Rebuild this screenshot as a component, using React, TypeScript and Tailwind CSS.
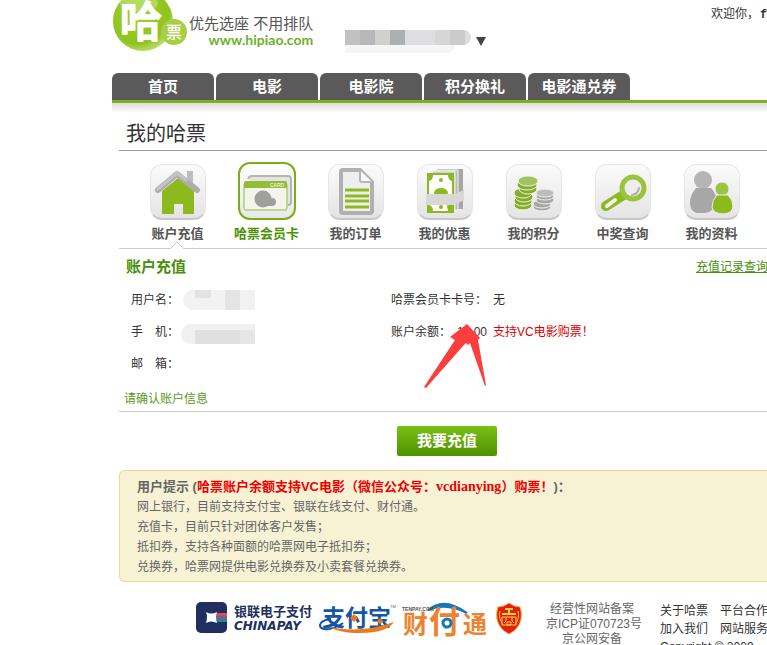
import type { ReactNode } from 'react'

interface MenuItem {
  label: string
  icon: ReactNode
  active?: boolean
}

const HouseIcon = () => (
  <svg viewBox="0 0 56 56" className="h-14 w-14 shrink-0">
    <path d="M37 7h6v14l-6-5z" fill="#bdbdbd" />
    <path d="M12 27 28 14l16 13v23H33V40h-9v10H12z" fill="#8db91f" />
    <path d="M8 26 27 10l20 16" fill="none" stroke="#adadad" strokeWidth="6" strokeLinecap="round" strokeLinejoin="round" />
    <path d="M8 25 27 9l9 7" fill="none" stroke="#c4c4c4" strokeWidth="3" strokeLinecap="round" />
  </svg>
)

const CardIcon = () => (
  <svg viewBox="0 0 56 56" className="h-14 w-14 shrink-0">
    <path d="M9 16q1-3 4-3h36q3 0 3 3v23q0 3-3 3" fill="#e4e4e4" stroke="#b5b5b5" strokeWidth="2" />
    <rect x="5" y="20" width="43" height="27" rx="2" fill="#f3f5ec" stroke="#94bd35" />
    <path d="M5 25v-5q0-2 2-2h39q2 0 2 2v5z" fill="#94bd35" />
    <text x="31" y="24" fontSize="5" fontFamily="Liberation Sans, sans-serif" fill="#fff">CARD</text>
    <circle cx="24" cy="36" r="8.5" fill="#9f9f9f" />
    <circle cx="33" cy="39" r="4" fill="#9f9f9f" />
    <path d="m20 43 13 0 2-6-5-4z" fill="#9f9f9f" />
  </svg>
)

const OrderIcon = () => (
  <svg viewBox="0 0 56 56" className="h-14 w-14 shrink-0">
    <path d="M15 6h17l12 12v29q0 2-2 2H15q-2 0-2-2V8q0-2 2-2z" fill="#eeeeee" stroke="#b0b0b0" strokeWidth="4" />
    <path d="M32 6v10q0 2 2 2h10" fill="#fafafa" stroke="#b5b5b5" strokeWidth="2" />
    <path d="M17 26h24M17 32h24M17 37h24M17 43h24" stroke="#8db91f" strokeWidth="3" />
  </svg>
)

const CouponIcon = () => (
  <svg viewBox="0 0 56 56" className="h-14 w-14 shrink-0">
    <path d="M20 5h26v40H20z" fill="#a6a6a6" />
    <path d="M18 6h23v40H18z" fill="#b9b9b9" stroke="#f3f3f3" />
    <path d="M15 7h23v40H15z" fill="#d1d1d1" stroke="#f3f3f3" />
    <path d="M10 9h27v40H10z" fill="#8db91f" />
    <path d="M16 11h15q0 5 4 6v19q-4 0-5 6l1 5H16q0-5-4-6V17q4-1 4-6z" fill="#fff" />
    <circle cx="24" cy="16" r="2" fill="#8db91f" />
    <ellipse cx="24" cy="29" rx="7" ry="5" fill="#8db91f" />
    <path d="M9 30h28l10-4v10l-10 5H9z" fill="#d8d8d8" />
    <circle cx="24" cy="43" r="2" fill="#8db91f" />
  </svg>
)

const CoinsIcon = () => (
  <svg viewBox="0 0 56 56" className="h-14 w-14 shrink-0">
    <g fill="#85ad2d" stroke="#eef5dd" strokeWidth="1">
      <ellipse cx="17" cy="41" rx="9" ry="5" />
      <ellipse cx="17" cy="37" rx="9" ry="5" />
      <ellipse cx="18" cy="33" rx="9" ry="5" />
      <ellipse cx="17" cy="29" rx="9" ry="5" />
      <ellipse cx="22" cy="25" rx="9" ry="5" />
      <ellipse cx="21" cy="21" rx="10" ry="5" />
      <ellipse cx="22" cy="17" rx="10" ry="5" fill="#a0c365" />
    </g>
    <g fill="#a5a5a5" stroke="#f2f2f2" strokeWidth="1">
      <ellipse cx="36" cy="43" rx="9" ry="4" />
      <ellipse cx="36" cy="40" rx="9" ry="4" />
      <ellipse cx="39" cy="36" rx="9" ry="4" />
      <ellipse cx="39" cy="32" rx="9" ry="4" />
      <ellipse cx="39" cy="29" rx="9" ry="4" fill="#bcbcbc" />
    </g>
  </svg>
)

const SearchIcon = () => (
  <svg viewBox="0 0 56 56" className="h-14 w-14 shrink-0">
    <path d="M11 42 30 30" stroke="#8db91f" strokeWidth="10" strokeLinecap="round" />
    <path d="m12 42 8-6" stroke="#f5f5f5" strokeWidth="4" strokeLinecap="round" />
    <circle cx="38" cy="24" r="11" fill="#ededed" stroke="#9cc33d" strokeWidth="5" />
    <path d="M44 24q-1 6-7 7" fill="none" stroke="#b0b0b0" strokeWidth="2" strokeLinecap="round" />
  </svg>
)

const PeopleIcon = () => (
  <svg viewBox="0 0 56 56" className="h-14 w-14 shrink-0">
    <circle cx="19" cy="16" r="9" fill="#b5b5b5" />
    <path d="M12 24h15q6 6 5 14-2 10-11 11H13Q6 47 6 39t6-15z" fill="#a7a7a7" />
    <circle cx="38" cy="25" r="7" fill="#9bc344" stroke="#eee" strokeWidth="1" />
    <path d="M33 31h11q5 5 5 11 0 7-9 8-11 0-12-7 0-7 5-12z" fill="#8db91f" stroke="#eee" strokeWidth="1" />
  </svg>
)

const tabs = ['首页', '电影', '电影院', '积分换礼', '电影通兑券']

const menu: MenuItem[] = [
  { label: '账户充值', icon: <HouseIcon /> },
  { label: '哈票会员卡', icon: <CardIcon />, active: true },
  { label: '我的订单', icon: <OrderIcon /> },
  { label: '我的优惠', icon: <CouponIcon /> },
  { label: '我的积分', icon: <CoinsIcon /> },
  { label: '中奖查询', icon: <SearchIcon /> },
  { label: '我的资料', icon: <PeopleIcon /> },
]

const tips = [
  '网上银行，目前支持支付宝、银联在线支付、财付通。',
  '充值卡，目前只针对团体客户发售；',
  '抵扣券，支持各种面额的哈票网电子抵扣券；',
  '兑换券，哈票网提供电影兑换券及小卖套餐兑换券。',
]

const Logo = () => (
  <a href="#" className="flex" aria-label="哈票">
    <svg viewBox="0 0 76 54" className="h-[54px] w-[76px]">
      <defs>
        <radialGradient id="ball" cx="40%" cy="35%" r="70%">
          <stop offset="0" stopColor="#a5d02a" />
          <stop offset="0.75" stopColor="#8fc31f" />
          <stop offset="1" stopColor="#c3e37a" />
        </radialGradient>
      </defs>
      <circle cx="31" cy="21" r="30" fill="url(#ball)" />
      <ellipse cx="27" cy="3" rx="19" ry="9" fill="#c5e487" opacity="0.6" />
      <circle cx="62" cy="32" r="13" fill="#a6cf45" />
      <text x="8" y="37" fontSize="42" fontWeight="500" fill="#fff" stroke="#fff" strokeWidth="2" strokeLinejoin="round" fontFamily="Noto Sans CJK SC, sans-serif">哈</text>
      <text x="54" y="38" fontSize="16" fontWeight="500" fill="#fff" fontFamily="Noto Sans CJK SC, sans-serif">票</text>
    </svg>
    <span className="ml-[1px] flex flex-col pt-[14px] text-right">
      <span className="text-[15px] leading-5 whitespace-nowrap text-[#555]">优先选座 不用排队</span>
      <span className="font-[Lato,sans-serif] text-sm leading-3 font-bold text-[#6fb02c]">www.hipiao.com</span>
    </span>
  </a>
)

const Header = () => (
  <header className="flex h-[73px] items-start">
    <Logo />
    <div className="ml-8 flex pt-[30px]">
      <div>
        <div className="flex h-[15px] overflow-hidden rounded-r-lg">
          <span className="w-[15px] bg-[#c2c1c1]" />
          <span className="w-[15px] bg-[#b5b7b9]" />
          <span className="w-[15px] bg-[#d0d0ce]" />
          <span className="w-[15px] bg-[#adb0b0]" />
          <span className="w-[30px] bg-[#dedddf]" />
          <span className="w-[15px] bg-[#d6d6d7]" />
          <span className="w-[15px] bg-[#cbcbcc]" />
          <span className="w-[6px] bg-[#dedede]" />
        </div>
        <div className="h-2 w-[110px] rounded-br-full bg-[#f6f6f6]" />
      </div>
      <button className="mt-[7px] ml-[5px] h-[9px]" aria-label="选择城市">
        <svg viewBox="0 0 10 9" className="h-[9px] w-[10px]">
          <path d="M0 0h10L5 9z" fill="#444" />
        </svg>
      </button>
    </div>
    <p className="mt-1 ml-auto w-14 shrink-0 leading-5 whitespace-nowrap">
      欢迎你，<b className="ml-[1px] font-['Liberation_Mono',monospace]">f</b>
    </p>
  </header>
)

const ChinaPay = () => (
  <a href="#" className="flex items-center gap-[7px] text-[#21305f]">
    <svg viewBox="0 0 31 31" className="h-[31px] w-[31px]">
      <rect width="31" height="31" rx="5" fill="#1f2f60" />
      <path d="M20 11h11v3H20z" fill="#d2505c" />
      <path d="M20 14h11v3H20z" fill="#7b5f86" />
      <path d="M20 17h11v3H20z" fill="#1d8a92" />
      <path d="M10 10q5 3 11 0-2 5 0 11-6-3-11 0 2-6 0-11z" fill="#fff" />
    </svg>
    <span className="flex w-[78px] flex-col">
      <span className="text-[13px] leading-4 font-bold whitespace-nowrap">银联电子支付</span>
      <span className="font-['DejaVu_Sans',sans-serif] text-xs leading-3 font-bold italic">CHINAPAY</span>
    </span>
  </a>
)

const Alipay = () => (
  <a href="#" aria-label="支付宝">
    <svg viewBox="0 0 78 34" className="h-[34px] w-[78px]">
      <text x="4" y="24" fontSize="23" fontWeight="700" fill="#1455a5" fontFamily="Noto Sans CJK SC, sans-serif">支付宝</text>
      <path d="M13 17Q3 18 2 23q0 5 9 4 9-2 14-6" fill="none" stroke="#1455a5" strokeWidth="2" />
      <path d="M12 25q30 7 64-5-8 11-33 11-22 0-31-6z" fill="#ec7a16" />
      <path d="m36 12 4 4-4 4-4-4zM62 16l3 3-3 3-3-3z" fill="#ec7a16" />
      <text x="72" y="6" fontSize="4" fill="#555" fontFamily="Liberation Sans, sans-serif">TM</text>
    </svg>
  </a>
)

const Tenpay = () => (
  <a href="#" aria-label="财付通">
    <svg viewBox="0 0 88 36" className="h-9 w-[88px]">
      <path d="M26 8Q42-6 65 11 44 0 26 8z" fill="#1677b9" stroke="#1677b9" strokeWidth="2" />
      <text x="0" y="9" fontSize="5" fontWeight="700" fill="#555" fontFamily="Liberation Sans, sans-serif">TENPAY.COM</text>
      <g fill="#ef8230" fontWeight="700" fontFamily="Noto Sans CJK SC, sans-serif">
        <text x="1" y="31" fontSize="25">财</text>
        <text x="27" y="31" fontSize="31">付</text>
        <text x="61" y="31" fontSize="24">通</text>
      </g>
      <circle cx="45" cy="21" r="4" fill="#fff" stroke="#1677b9" strokeWidth="3" />
    </svg>
  </a>
)

const Shield = () => (
  <svg viewBox="0 0 26 33" className="h-[33px] w-[26px]" role="img" aria-label="工商">
    <path d="M13 1q5 4 11 4 2 5 1 12-2 10-12 15Q3 27 1 17 0 10 2 5q6 0 11-4z" fill="#e31d12" stroke="#f5a623" />
    <path d="M9 7h8M13 7v5M6 12h14" stroke="#f9d43a" strokeWidth="2" />
    <path d="M6 15h14v8H6zM10 15v4l-2 2M16 15v4l2 2M11 20h4v3h-4z" fill="none" stroke="#f9d43a" strokeWidth="1" />
    <path d="M4 9q-2 7 3 14M22 9q2 7-3 14" fill="none" stroke="#f9d43a" strokeWidth="1" />
  </svg>
)

const Footer = () => (
  <footer className="mt-[20px] flex items-start pl-[77px]">
    <ChinaPay />
    <div className="ml-[6px]">
      <Alipay />
    </div>
    <div className="ml-[6px]">
      <Tenpay />
    </div>
    <div className="ml-[6px]">
      <Shield />
    </div>
    <p className="ml-6 w-[92px] shrink-0 text-center leading-[15px] whitespace-nowrap text-[#666]">
      经营性网站备案
      <br />
      京ICP证070723号
      <br />
      京公网安备
    </p>
    <div className="ml-[22px] w-[107px] shrink-0 leading-[18px] whitespace-nowrap">
      <div className="flex gap-3">
        <a href="#">关于哈票</a>
        <a href="#">平台合作</a>
      </div>
      <div className="flex gap-3">
        <a href="#">加入我们</a>
        <a href="#">网站服务</a>
      </div>
      <p>Copyright © 2009</p>
    </div>
  </footer>
)

const App = () => {
  return (
    <div className="h-screen overflow-hidden bg-white pl-28 font-['Liberation_Sans','Noto_Sans_CJK_SC',sans-serif] text-xs text-[#333]">
      <Header />

      <nav className="flex gap-[2px] border-b-3 border-[#84ae1c]">
        {tabs.map((tab) => (
          <a
            key={tab}
            href="#"
            className="h-[27px] w-[102px] rounded-t-md bg-[#5a5a5a] text-center text-[15px] leading-7 font-bold text-white"
          >
            {tab}
          </a>
        ))}
      </nav>
      <div className="h-[10px] bg-linear-to-b from-[#dedede] to-white" />

      <main className="pl-[7px]">
        <h1 className="h-[38px] border-b border-[#999] pt-[6px] pl-[7px] text-xl leading-[30px]">我的哈票</h1>

        <ul className="relative flex border-b border-[#ccc] pt-[11px] pb-1 pl-[14px]">
          {menu.map((item) => (
            <li key={item.label} className="w-[89px] shrink-0">
              <a href="#" className="flex flex-col items-center">
                <span
                  className={
                    item.active
                      ? 'flex h-[58px] w-[58px] items-center justify-center rounded-xl border-2 border-[#7aac1b] bg-linear-to-b from-white to-[#e8e8e8]'
                      : 'mt-[2px] flex h-14 w-14 items-center justify-center rounded-xl border border-b-2 border-[#e6e6e6] border-b-[#c8c8c8] bg-linear-to-b from-[#fbfbfb] to-[#e4e4e4]'
                  }
                >
                  {item.icon}
                </span>
                <span
                  className={
                    item.active
                      ? 'mt-1 text-[13px] leading-5 font-bold text-[#4a9400]'
                      : 'mt-1 text-[13px] leading-5 font-bold text-[#555]'
                  }
                >
                  {item.label}
                </span>
              </a>
            </li>
          ))}
          <svg viewBox="0 0 14 8" className="absolute -bottom-px left-[51px] h-2 w-[14px]">
            <path d="m0 8 7-7 7 7z" fill="#fff" />
            <path d="m0 8 7-7 7 7" fill="none" stroke="#ccc" />
          </svg>
        </ul>

        <div className="flex h-[35px] items-center justify-between pl-[7px]">
          <h2 className="text-[15px] font-bold text-[#4a8f0a]">账户充值</h2>
          <a href="#" className="-mr-px whitespace-nowrap text-[#4a8f0a] underline">
            充值记录查询
          </a>
        </div>

        <div className="grid grid-cols-[260px_1fr] pl-3 leading-8">
          <div className="flex items-center">
            用户名：
            <span className="ml-1 flex h-5 w-[72px] overflow-hidden rounded-l-full bg-[#f2f2f2]">
              <span className="ml-3 h-2 w-4 bg-[#e3e3e3]" />
              <span className="ml-[14px] w-[15px] bg-[#e4e4e4]" />
            </span>
          </div>
          <div>
            哈票会员卡卡号：<span className="ml-[6px]">无</span>
          </div>
          <div className="flex items-center">
            手　机：
            <span className="mt-1 ml-[2px] flex h-5 w-[74px] overflow-hidden rounded-l-full bg-[#f0f0f0]">
              <span className="mt-[6px] ml-[14px] w-[45px] bg-[#e0e0e0]" />
              <span className="mt-[6px] w-[15px] bg-[#e6e6e6]" />
            </span>
          </div>
          <div className="relative flex">
            <span>账户余额：</span>
            <span className="ml-[6px]">10.00</span>
            <span className="ml-[6px] text-[#d00]">支持VC电影购票！</span>
            <svg viewBox="0 0 64 66" className="absolute top-[7px] left-8 h-[66px] w-16">
              <path d="M44 1 27 14l5 3L1 64l2 1 37-42 3-3 2 2 2-2 15 43 1-1-8-45 2-2z" fill="#fb3e3e" />
            </svg>
          </div>
          <div>邮　箱：</div>
        </div>

        <p className="border-b border-[#ccc] pt-[7px] pl-[5px] leading-6 text-[#5a9a1a]">请确认账户信息</p>

        <button className="mt-[14px] ml-[278px] block h-[30px] w-[100px] rounded-xs bg-linear-to-b from-[#7cbf17] to-[#4d9200] text-[15px] font-bold text-white">
          我要充值
        </button>

        <section className="mt-[14px] rounded-l-md border border-r-0 border-[#e6dc8c] bg-[#f8f2d5] pt-[6px] pb-1 pl-[17px] leading-5 text-[#666]">
          <h3 className="text-[13px] font-bold whitespace-nowrap">
            用户提示 (
            <span className="text-[#f00000]">
              哈票账户余额支持VC电影（微信公众号：
              <span className="font-['Liberation_Serif',serif] text-sm leading-5">vcdianying</span>）购票！
            </span>
            )：
          </h3>
          {tips.map((tip) => (
            <p key={tip}>{tip}</p>
          ))}
        </section>

        <Footer />
      </main>
    </div>
  )
}

export default App
